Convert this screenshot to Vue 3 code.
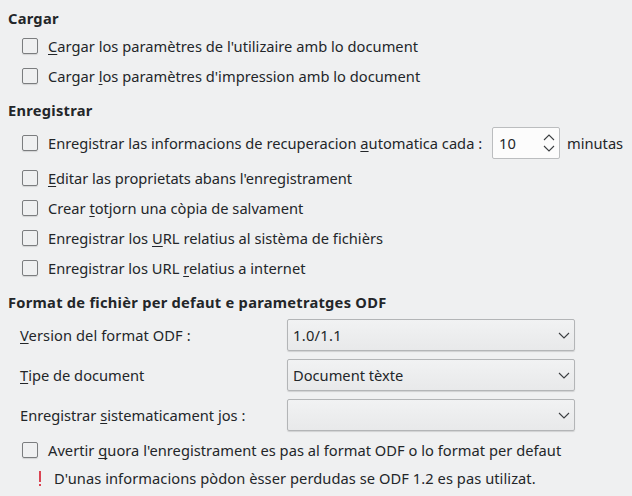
<script setup>
const loadOptions = [
  { text: ['', 'C', "argar los paramètres de l'utilizaire amb lo document"], spacing: 0.02 },
  { text: ['Cargar ', 'l', "os paramètres d'impression amb lo document"], spacing: 0.02 },
]
const saveOptions = [
  { text: ['', 'E', "ditar las proprietats abans l'enregistrament"], spacing: -0.04 },
  { text: ['Crear ', 't', 'otjorn una còpia de salvament'], spacing: 0 },
  { text: ['Enregistrar los ', 'U', 'RL relatius al sistèma de fichièrs'], spacing: 0.02 },
  { text: ['Enregistrar los URL ', 'r', 'elatius a internet'], spacing: 0.01 },
]
const formats = [
  { label: ['', 'V', 'ersion del format ODF :'], value: '1.0/1.1', spacing: 0.08, valueSpacing: 0.3 },
  { label: ['', 'T', 'ipe de document'], value: 'Document tèxte', spacing: 0, valueSpacing: 0 },
  { label: ['Enregistrar ', 's', 'istematicament jos :'], value: '', spacing: 0, valueSpacing: 0 },
]
</script>

<template>
  <main class="page">
    <h2 class="first">Cargar</h2>
    <div v-for="(o, i) in loadOptions" :key="i" class="row">
      <span class="box"></span>
      <span class="text" :style="{ letterSpacing: o.spacing + 'px' }">{{ o.text[0] }}<u>{{ o.text[1] }}</u>{{ o.text[2] }}</span>
    </div>

    <h2>Enregistrar</h2>
    <div class="row tall">
      <span class="box"></span>
      <span class="text auto">Enregistrar las informacions de recuperacion <u>a</u>utomatica cada :</span>
      <div class="spin">
        <span>10</span>
        <svg width="12" height="20" viewBox="0 0 12 20">
          <path d="M1 7 6 2 11 7M1 13 6 18 11 13" />
        </svg>
      </div>
      <span class="text">minutas</span>
    </div>
    <div v-for="(o, i) in saveOptions" :key="i" class="row">
      <span class="box"></span>
      <span class="text" :style="{ letterSpacing: o.spacing + 'px' }">{{ o.text[0] }}<u>{{ o.text[1] }}</u>{{ o.text[2] }}</span>
    </div>

    <h2>Format de fichièr per defaut e parametratges ODF</h2>
    <div v-for="(f, i) in formats" :key="i" class="field">
      <span class="text" :style="{ letterSpacing: f.spacing + 'px' }">{{ f.label[0] }}<u>{{ f.label[1] }}</u>{{ f.label[2] }}</span>
      <div class="select">
        <span :style="{ letterSpacing: f.valueSpacing + 'px' }">{{ f.value }}</span>
        <svg width="12" height="8" viewBox="0 0 12 8"><path d="M1 2 6 7 11 2" /></svg>
      </div>
    </div>
    <div class="row">
      <span class="box"></span>
      <span class="text warn">Avertir <u>q</u>uora l'enregistrament es pas al format ODF o lo format per defaut</span>
    </div>
    <div class="notice">
      <svg width="2" height="16" viewBox="0 0 2 16"><path d="M0 0h2v11H0zM0 13h2v2H0z" /></svg>
      <span class="text">D'unas informacions pòdon èsser perdudas se ODF 1.2 es pas utilizat.</span>
    </div>
  </main>
</template>

<style>
body {
  background: #eff0f1;
}
</style>

<style scoped>
.page {
  box-sizing: border-box;
  width: 632px;
  height: 496px;
  overflow: hidden;
  background: #eff0f1;
  color: #232629;
  font: 14.667px/20px "Noto Sans", sans-serif;
  font-variant-ligatures: common-ligatures;
  white-space: pre;
}
h2 {
  margin: 0;
  padding: 9px 0 3px 8px;
  font-size: 14.667px;
  line-height: 20px;
  font-weight: 700;
  letter-spacing: 0.26px;
}
h2.first {
  padding-top: 8px;
}
.row {
  display: flex;
  align-items: center;
  height: 30px;
  padding-left: 22px;
}
.row.tall {
  height: 40px;
}
.box {
  box-sizing: border-box;
  flex: none;
  width: 16px;
  height: 16px;
  margin-right: 10px;
  border: 1px solid #7b7d7f;
  border-radius: 2px;
  box-shadow: 0 1px 1px rgba(0, 0, 0, 0.12);
}
u {
  text-decoration: underline 1px;
  text-underline-offset: 2px;
  text-decoration-skip-ink: none;
}
.auto {
  width: 444px;
}
.warn {
  letter-spacing: 0.027px;
}
.spin {
  box-sizing: border-box;
  display: flex;
  align-items: center;
  justify-content: space-between;
  width: 68px;
  height: 32px;
  margin-right: 7px;
  padding: 0 4px 0 6px;
  border: 1px solid #bbbdbf;
  border-radius: 2px;
  background: #fcfcfc;
}
svg {
  flex: none;
  fill: none;
  stroke: #3b3e41;
  stroke-width: 1.1;
}
.field {
  display: flex;
  align-items: center;
  height: 40px;
  padding-left: 20px;
}
.field > .text {
  width: 267px;
}
.select {
  box-sizing: border-box;
  display: flex;
  align-items: center;
  justify-content: space-between;
  width: 288px;
  height: 32px;
  padding: 0 4px 0 5px;
  border: 1px solid #b3b5b7;
  border-radius: 2px;
  background: linear-gradient(#f1f2f3, #e8e9ea);
  box-shadow: 0 1px 1px rgba(0, 0, 0, 0.13);
}
.notice {
  display: flex;
  align-items: center;
  height: 28px;
  padding-left: 39px;
}
.notice svg {
  margin-right: 13px;
  fill: #da4453;
  stroke: none;
}
.notice .text {
  padding-bottom: 2px;
  letter-spacing: 0.06px;
}
</style>
